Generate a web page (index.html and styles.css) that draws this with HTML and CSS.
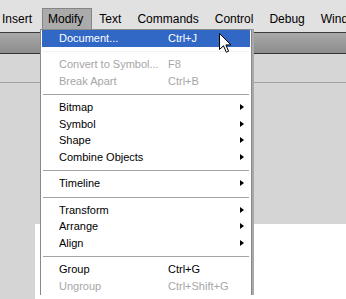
FILE: index.html
```html
<!DOCTYPE html>
<html>
<head>
<meta charset="utf-8">
<link rel="stylesheet" href="styles.css">
</head>
<body>
<div class="app">
  <div class="menubar">
    <span class="mi">Insert</span>
    <span class="mi active">Modify</span>
    <span class="mi">Text</span>
    <span class="mi">Commands</span>
    <span class="mi">Control</span>
    <span class="mi">Debug</span>
    <span class="mi">Window</span>
  </div>
  <div class="toolbar"></div>
  <div class="panel"></div>
  <div class="workspace"><div class="stage"></div></div>

  <div class="menu">
    <div class="row hl"><span class="label">Document...</span><span class="key">Ctrl+J</span></div>
    <div class="sep blank"></div>
    <div class="row dis"><span class="label">Convert to Symbol...</span><span class="key">F8</span></div>
    <div class="row dis"><span class="label">Break Apart</span><span class="key">Ctrl+B</span></div>
    <div class="sep"></div>
    <div class="row sub"><span class="label">Bitmap</span></div>
    <div class="row sub"><span class="label">Symbol</span></div>
    <div class="row sub"><span class="label">Shape</span></div>
    <div class="row sub"><span class="label">Combine Objects</span></div>
    <div class="sep"></div>
    <div class="row sub"><span class="label">Timeline</span></div>
    <div class="sep"></div>
    <div class="row sub"><span class="label">Transform</span></div>
    <div class="row sub"><span class="label">Arrange</span></div>
    <div class="row sub"><span class="label">Align</span></div>
    <div class="sep"></div>
    <div class="row"><span class="label">Group</span><span class="key">Ctrl+G</span></div>
    <div class="row dis"><span class="label">Ungroup</span><span class="key">Ctrl+Shift+G</span></div>
  </div>

  <svg class="cursor" width="13" height="21" viewBox="0 0 13 21">
    <path d="M0.5 0.5 L0.5 16.5 L4.5 12.8 L7.3 19.2 L9.6 18.2 L6.9 11.9 L11.9 11.9 Z" fill="#fff" stroke="#000" stroke-width="1" stroke-linejoin="miter"/>
  </svg>
</div>
</body>
</html>
```

FILE: styles.css
```css
html, body {
  margin: 0;
  padding: 0;
}
body {
  width: 346px;
  height: 299px;
  overflow: hidden;
  font-family: "Liberation Sans", Arial, sans-serif;
  background: #fff;
}
.app {
  position: relative;
  width: 346px;
  height: 299px;
  overflow: hidden;
  display: flex;
  flex-direction: column;
}
.menubar {
  height: 32px;
  flex: none;
  background: #e1e1e1;
  border-bottom: 1px solid #3a3a3a;
  display: flex;
  align-items: flex-start;
  margin-left: -7px;
  white-space: nowrap;
  font-size: 12px;
  color: #000;
}
.mi {
  margin-top: 8px;
  margin-left: 3px;
  padding: 0 8px 0 5px;
  height: 21px;
  line-height: 21px;
  border: 1px solid transparent;
  border-bottom: none;
  margin-right: -2px;
}
.mi.active {
  background: #ababab;
  border-color: #858585;
  height: 22px;
}
.toolbar {
  height: 20px;
  flex: none;
  background: linear-gradient(#a9a9a9, #8c8c8c);
  border-bottom: 1px solid #333;
}
.panel {
  height: 28px;
  flex: none;
  background: #d6d6d6;
  border-bottom: 1px solid #a2a2a2;
}
.workspace {
  flex: 1;
  background: #d5d5d5;
  padding: 141px 0 0 35px;
  display: flex;
}
.stage {
  flex: 1;
  background: #fff;
}
.menu {
  position: absolute;
  left: 40px;
  top: 29px;
  width: 208px;
  padding: 0 1px;
  background: #fff;
  border: 1px solid #8a8a8a;
  border-bottom: none;
  box-shadow: 2px 0 0 #a9a9a9;
  font-size: 11px;
  color: #000;
}
.row {
  position: relative;
  display: flex;
  height: 16.67px;
  line-height: 17.8px;
  white-space: nowrap;
}
.label {
  box-sizing: border-box;
  width: 126px;
  padding-left: 17px;
}
.row.hl {
  background: #3168c6;
  color: #fff;
}
.row.dis {
  color: #a6a6a6;
}
.row.sub::after {
  content: "";
  position: absolute;
  left: 198px;
  top: 5px;
  border-left: 4px solid #000;
  border-top: 3.5px solid transparent;
  border-bottom: 3.5px solid transparent;
}
.sep {
  height: 9.6px;
  box-sizing: border-box;
  padding-top: 4.5px;
}
.sep::before {
  content: "";
  display: block;
  height: 1px;
  margin: 0 1px;
  background: #a3a3a3;
}
.sep.blank::before {
  background: #f2f2f2;
}
.cursor {
  position: absolute;
  left: 219px;
  top: 33px;
}
```
